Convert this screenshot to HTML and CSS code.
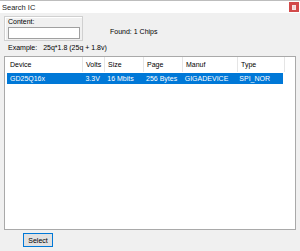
FILE: index.html
```html
<!DOCTYPE html>
<html>
<head>
<meta charset="utf-8">
<link rel="stylesheet" href="styles.css">
</head>
<body>
<div class="window">
  <div class="titlebar">
    <span class="title">Search IC</span>
    <span class="close"><span class="close-mark"></span></span>
  </div>
  <div class="content">
    <div class="top">
      <div class="group">
        <div class="group-label">Content:</div>
        <div class="input"></div>
      </div>
      <div class="found">Found: 1 Chips</div>
    </div>
    <div class="example"><span>Example:</span><span>25q*1.8 (25q + 1.8v)</span></div>
    <div class="list">
      <div class="row header">
        <div class="c c1">Device</div>
        <div class="c c2">Volts</div>
        <div class="c c3">Size</div>
        <div class="c c4">Page</div>
        <div class="c c5">Manuf</div>
        <div class="c c6">Type</div>
        <div class="c c7"></div>
      </div>
      <div class="row selected">
        <div class="c c1">GD25Q16x</div>
        <div class="c c2">3.3V</div>
        <div class="c c3">16 Mbits</div>
        <div class="c c4">256 Bytes</div>
        <div class="c c5">GIGADEVICE</div>
        <div class="c c6">SPI_NOR</div>
      </div>
    </div>
    <div class="footer">
      <button class="btn">Select</button>
    </div>
  </div>
</div>
</body>
</html>
```
FILE: styles.css
```css
* { box-sizing: border-box; }
html, body { margin: 0; padding: 0; }
body {
  width: 300px;
  height: 251px;
  overflow: hidden;
  font-family: "Liberation Sans", Arial, sans-serif;
  font-size: 7px;
  color: #000;
}
.window {
  width: 300px;
  height: 251px;
  display: flex;
  flex-direction: column;
  background: #f0f0f0;
}
.titlebar {
  height: 15px;
  background: #fff;
  border-top: 1px solid #bdbdbd;
  display: flex;
  align-items: center;
  padding-left: 2px;
  padding-right: 1px;
}
.title { font-size: 7.5px; color: #222; }
.close {
  margin-left: auto;
  width: 10px;
  height: 10px;
  background: #d24a4a;
  display: flex;
  align-items: center;
  justify-content: center;
}
.close-mark {
  width: 4px;
  height: 5px;
  background: #f4d6d6;
  border: 1px solid #f7e4e4;
}
.content {
  flex: 1;
  display: flex;
  flex-direction: column;
  padding: 3px 4px 4px 4px;
}
.top {
  display: flex;
  align-items: center;
}
.group {
  width: 79px;
  height: 25px;
  border: 1px solid #d0d0d0;
  box-shadow: inset 1px 1px 0 #fff;
  padding: 1px 3px 0 3px;
}
.group-label { line-height: 8px; }
.input {
  width: 72px;
  height: 12px;
  background: #fff;
  border: 1px solid #a0a0a0;
  margin-top: 1px;
}
.found {
  margin-left: 27px;
  margin-top: 6px;
}
.example {
  display: flex;
  gap: 6px;
  padding-left: 4px;
  margin-top: 1px;
  height: 10px;
  align-items: center;
}
.list {
  margin-top: 4px;
  height: 174px;
  background: #fff;
  border: 1px solid #a9a9a9;
  padding: 0 2px;
}
.row {
  display: flex;
  height: 15px;
  align-items: center;
}
.header .c {
  border-right: 1px solid #e5e5e5;
  height: 15px;
  display: flex;
  align-items: center;
}
.row.selected {
  height: 11px;
  margin-top: 1px;
  background: #0078d7;
  color: #fff;
  width: 276px;
}
.c { padding-left: 3px; white-space: nowrap; }
.c1 { width: 76px; }
.c2 { width: 22px; }
.c3 { width: 39px; }
.c4 { width: 39px; }
.c5 { width: 55px; }
.c6 { width: 47px; }
.c7 { width: 1px; border-right: none !important; }
.footer {
  display: flex;
  padding-left: 19px;
  margin-top: 3px;
}
.btn {
  width: 30px;
  height: 14px;
  background: #e1e1e1;
  border: 1px solid #0078d7;
  font-family: "Liberation Sans", Arial, sans-serif;
  font-size: 7px;
  padding: 0;
  color: #000;
}
```
